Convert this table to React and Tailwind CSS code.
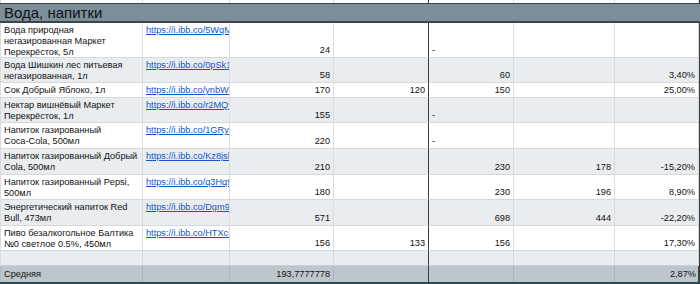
import React from 'react';

const rows = [
  { name: 'Вода природная негазированная Маркет Перекрёсток, 5л', link: 'https://i.ibb.co/5WqMk2x/voda.jpg', c: '24', e: '-', h: 'h-[35px]' },
  { name: 'Вода Шишкин лес питьевая негазированная, 1л', link: 'https://i.ibb.co/0pSk1mT/shishkin.jpg', c: '58', e: '60', g: '3,40%', h: 'h-[25px]' },
  { name: 'Сок Добрый Яблоко, 1л', link: 'https://i.ibb.co/ynbWJx4/sok.jpg', c: '170', d: '120', e: '150', g: '25,00%', h: 'h-[15px]' },
  { name: 'Нектар вишнёвый Маркет Перекрёсток, 1л', link: 'https://i.ibb.co/r2MQv8s/nektar.jpg', c: '155', e: '-', h: 'h-[25px]' },
  {
    name: (
      <>
        Напиток газированный <span className="whitespace-nowrap">Coca-Cola,</span> 500мл
      </>
    ),
    link: 'https://i.ibb.co/1GRy7Lp/cola.jpg', c: '220', e: '-', h: 'h-[26px]',
  },
  { name: 'Напиток газированный Добрый Cola, 500мл', link: 'https://i.ibb.co/Kz8jsk2/dobry.jpg', c: '210', e: '230', f: '178', g: '-15,20%', h: 'h-[26px]' },
  { name: 'Напиток газированный Pepsi, 500мл', link: 'https://i.ibb.co/q3Hq9Yb/pepsi.jpg', c: '180', e: '230', f: '196', g: '8,90%', h: 'h-[25px]' },
  { name: 'Энергетический напиток Red Bull, 473мл', link: 'https://i.ibb.co/Dgm9Rt1/redbull.jpg', c: '571', e: '698', f: '444', g: '-22,20%', h: 'h-[26px]' },
  { name: 'Пиво безалкогольное Балтика №0 светлое 0.5%, 450мл', link: 'https://i.ibb.co/HTXcl3P/baltika.jpg', c: '156', d: '133', e: '156', g: '17,30%', h: 'h-[25px]' },
];

const grid = 'grid grid-cols-[142px_87px_104px_95px_85px_101px_84px] border-r-2 border-[#3c3c3c]';

const Num = ({ v, dark, left }) => (
  <div
    className={`flex flex-col justify-end px-[3px] pb-[1px] border-b border-[#d5d9dc] ${
      dark ? 'border-r border-r-[#3a3a3a]' : 'border-r border-r-[#dcdcdc]'
    } ${left ? 'text-left' : 'text-right'}`}
  >
    {v}
  </div>
);

export default function App() {
  return (
    <div
      className="w-[700px] h-[284px] overflow-hidden bg-white text-[9.2px] leading-[11px] text-[#111]"
      style={{ fontFamily: '"Liberation Sans", Arial, sans-serif' }}
    >
      {/* partial row above */}
      <div className={`${grid} h-[3px] border-l border-l-[#dcdcdc]`}>
        {[0, 1, 2, 3, 4, 5, 6].map((i) => (
          <div key={i} className={`border-r ${i === 3 ? 'border-r-[#3a3a3a]' : 'border-r-[#dcdcdc]'}`} />
        ))}
      </div>

      {/* section header */}
      <div className="h-[20px] bg-[#7a8f99] border-t border-b-2 border-[#3e4448] pl-[4px] text-[15px] leading-[17px] text-[#111]">
        Вода, напитки
      </div>

      {rows.map((r, i) => (
        <div key={i} className={`${grid} ${r.h} border-l border-l-[#dcdcdc] ${i % 2 ? 'bg-[#e9edf0]' : 'bg-white'}`}>
          <div className="pl-[3px] pr-[2px] pt-[2px] border-r border-r-[#dcdcdc] border-b border-[#d5d9dc] overflow-hidden">
            {r.name}
          </div>
          <div className="pl-[3px] pt-[2px] border-r border-r-[#dcdcdc] border-b border-[#d5d9dc] overflow-hidden whitespace-nowrap">
            <a href="#" className="text-[#1155cc] underline">{r.link}</a>
          </div>
          <Num v={r.c} />
          <Num v={r.d} dark />
          <Num v={r.e} left={r.e === '-'} />
          <Num v={r.f} />
          <Num v={r.g} />
        </div>
      ))}

      {/* empty row */}
      <div className={`${grid} h-[15px] border-l border-l-[#dcdcdc] bg-[#e9edf0]`}>
        {[0, 1, 2, 3, 4, 5, 6].map((i) => (
          <div key={i} className={`border-b border-[#c9cfd3] border-r ${i === 3 ? 'border-r-[#3a3a3a]' : 'border-r-[#d5d9dc]'}`} />
        ))}
      </div>

      {/* summary */}
      <div className={`${grid} h-[16px] bg-[#bcc7cc] border-l border-l-[#b0babf]`}>
        <div className="px-[3px] pt-[3px] border-r border-r-[#aab4b9]">Средняя</div>
        <div className="border-r border-r-[#aab4b9]" />
        <div className="px-[3px] pt-[3px] text-right border-r border-r-[#aab4b9]">193,7777778</div>
        <div className="border-r border-r-[#3a3a3a]" />
        <div className="border-r border-r-[#aab4b9]" />
        <div className="border-r border-r-[#aab4b9]" />
        <div className="px-[3px] pt-[3px] text-right">2,87%</div>
      </div>
      <div className="h-[2px] bg-[#2c4a55]" />
    </div>
  );
}
